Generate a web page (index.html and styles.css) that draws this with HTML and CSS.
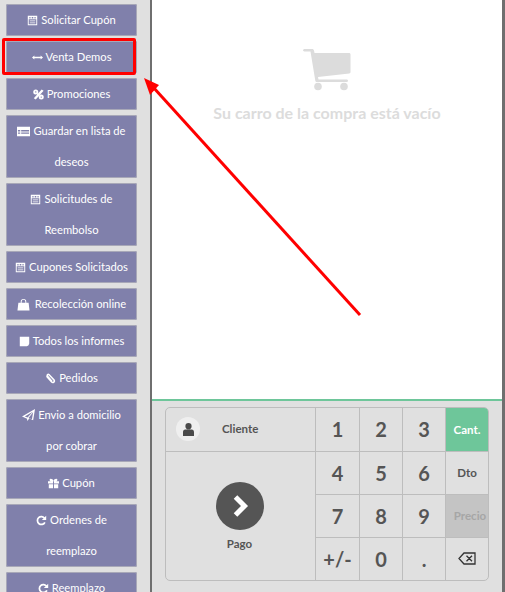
FILE: index.html
```html
<!DOCTYPE html>
<html lang="es">
<head>
  <meta charset="UTF-8">
  <title>Punto de venta</title>
  <link rel="stylesheet" href="styles.css">
</head>
<body>
  <div class="pos">
    <div class="side-menu">
      <a class="menu-btn"><svg class="ico" viewBox="0 0 14 14"><path fill="currentColor" fill-rule="evenodd" d="M1 1h12v12H1zM2.200 5.500v6.300h9.600V5.500zM3 2.500v2h1.500v-2zM6 2.500v2h2v-2zM9.500 2.500v2H11v-2zM3.500 7h7v1h-7zM3.500 9.500h7v1h-7z"/></svg>Solicitar Cupón</a>
      <a class="menu-btn"><svg class="ico" viewBox="0 0 14 14"><path fill="currentColor" d="M0 7l3-2.500V6h8V4.500L14 7l-3 2.500V8H3v1.500z"/></svg>Venta Demos</a>
      <a class="menu-btn"><svg class="ico" viewBox="0 0 14 14"><path fill="currentColor" fill-rule="evenodd" d="M11 .5l2.500 1.700L3.500 13.500 1 11.800zM3.500 .5a3.200 3.200 0 1 1 0 6.400 3.200 3.200 0 0 1 0-6.400zM3.500 2.800a.9.9 0 1 0 0 1.800.9.9 0 0 0 0-1.800zM10.500 7.100a3.200 3.200 0 1 1 0 6.400 3.200 3.200 0 0 1 0-6.400zM10.500 9.400a.9.9 0 1 0 0 1.800.9.9 0 0 0 0-1.800z"/></svg>Promociones</a>
      <a class="menu-btn"><svg class="ico ico-big" viewBox="0 0 14 14"><path fill="currentColor" fill-rule="evenodd" d="M0 2h14v10H0zM1 5.500v1.500h2.500V5.500zM4.500 5.500v1.500H13V5.500zM1 8v1.500h2.500V8zM4.500 8v1.500H13V8z"/></svg>Guardar en lista de deseos</a>
      <a class="menu-btn"><svg class="ico" viewBox="0 0 14 14"><path fill="currentColor" fill-rule="evenodd" d="M1 1h12v12H1zM2.200 5.500v6.300h9.600V5.500zM3 2.500v2h1.500v-2zM6 2.500v2h2v-2zM9.500 2.500v2H11v-2zM3.500 7h7v1h-7zM3.500 9.500h7v1h-7z"/></svg>Solicitudes de Reembolso</a>
      <a class="menu-btn"><svg class="ico" viewBox="0 0 14 14"><path fill="currentColor" fill-rule="evenodd" d="M1 1h12v12H1zM2.200 5.500v6.300h9.600V5.500zM3 2.500v2h1.500v-2zM6 2.500v2h2v-2zM9.500 2.500v2H11v-2zM3.500 7h7v1h-7zM3.500 9.500h7v1h-7z"/></svg>Cupones Solicitados</a>
      <a class="menu-btn"><svg class="ico ico-big ico-wide" viewBox="0 0 14 14"><path fill="currentColor" fill-rule="evenodd" d="M1.500 5H4V4a3 3 0 0 1 6 0v1h2.500l1 8.500H.5zM5 5h4V4a2 2 0 0 0-4 0z"/></svg>Recolección online</a>
      <a class="menu-btn"><svg class="ico" viewBox="0 0 14 14"><path fill="currentColor" d="M1 1h12v9l-3 3H1zM10.800 13v-2.200H13z"/></svg>Todos los informes</a>
      <a class="menu-btn"><svg class="ico" viewBox="0 0 14 14"><path fill="none" stroke="currentColor" stroke-width="2" d="M2 4l6.500 7.500a2 2 0 0 0 3-2.600L5 2a1.400 1.400 0 0 0-2 1.800l6 7"/></svg>Pedidos</a>
      <a class="menu-btn"><svg class="ico ico-big" viewBox="0 0 14 14"><path fill="currentColor" fill-rule="evenodd" d="M14 0l-2 12-4-1.700L5.500 13V10.500L0 8.200zM11.500 3L3 8l3 1.200zM12 3.500L7 9.600l3.700 1.500z"/></svg>Envio a domicilio<br>por cobrar</a>
      <a class="menu-btn"><svg class="ico" viewBox="0 0 14 14"><path fill="currentColor" d="M0 4.200h6.400v2.800H0zM7.600 4.200H14v2.800H7.600zM1 8h5.400v5H1zM7.600 8H13v5H7.600zM3.500 1C5 1 6.500 2 7 4c.5-2 2-3 3.500-3 2 0 2 3 0 3h-7c-2 0-2-3 0-3z"/></svg>Cupón</a>
      <a class="menu-btn"><svg class="ico" viewBox="0 0 14 14"><path fill="none" stroke="currentColor" stroke-width="2.200" d="M11.300 9.300A5 5 0 1 1 11 4.300"/><path fill="currentColor" d="M13 1v5.500H7.500z"/></svg>Ordenes de reemplazo</a>
      <a class="menu-btn"><svg class="ico" viewBox="0 0 14 14"><path fill="none" stroke="currentColor" stroke-width="2.200" d="M11.300 9.300A5 5 0 1 1 11 4.300"/><path fill="currentColor" d="M13 1v5.500H7.500z"/></svg>Reemplazo</a>
    </div>

    <div class="main">
      <div class="cart">
        <svg class="cart-ico" viewBox="0 0 48 42"><path fill="#dcdcdc" d="M2 0h7c1.200 0 1.800.6 2 1.600L11.500 4H46c1 0 1.500.6 1.500 1.500V23c0 .8-.5 1.300-1.300 1.400L15 28l.5 2.500h28c1 0 1.500.6 1.500 1.250s-.5 1.250-1.500 1.250H14c-1 0-1.500-.5-1.700-1.300L7.500 2.500H2C.7 2.500 0 1.900 0 1.250S.7 0 2 0z"/><circle fill="#dcdcdc" cx="15" cy="37.500" r="3.800"/><circle fill="#dcdcdc" cx="41" cy="37.500" r="3.800"/></svg>
        <p class="cart-empty">Su carro de la compra está vacío</p>
      </div>
      <div class="pad-area">
        <div class="pad">
          <div class="pad-left">
            <div class="client">
              <span class="avatar"><svg viewBox="0 0 12 14"><path fill="#4a4a4a" d="M6 0a3.400 3.400 0 1 1 0 6.800A3.400 3.400 0 0 1 6 0zM2.500 7h7c1.500 0 2.500 1.200 2.500 3v4H0v-4c0-1.800 1-3 2.500-3z"/></svg></span>
              <span class="client-name">Cliente</span>
            </div>
            <div class="pay">
              <span class="pay-circle"><svg viewBox="0 0 18 24"><path fill="none" stroke="#fff" stroke-width="5" d="M3.500 3l9 9-9 9"/></svg></span>
              <span class="pay-label">Pago</span>
            </div>
          </div>
          <div class="keys">
            <button class="key">1</button>
            <button class="key">2</button>
            <button class="key">3</button>
            <button class="key mode active">Cant.</button>
            <button class="key">4</button>
            <button class="key">5</button>
            <button class="key">6</button>
            <button class="key mode">Dto</button>
            <button class="key">7</button>
            <button class="key">8</button>
            <button class="key">9</button>
            <button class="key mode off">Precio</button>
            <button class="key">+/-</button>
            <button class="key">0</button>
            <button class="key">.</button>
            <button class="key back"><svg viewBox="0 0 18 13"><path fill="none" stroke="#333" stroke-width="1.300" d="M6 1h11v11H6L1 6.500zM8.500 3.800l5.500 5.500M14 3.800L8.500 9.300"/></svg></button>
          </div>
        </div>
      </div>
    </div>
  </div>

  <!-- anotaciones de la captura -->
  <div class="mark-box"></div>
  <svg class="mark-arrow" viewBox="0 0 505 592"><path fill="none" stroke="#ff0000" stroke-width="3" d="M360 315L153 87"/><path fill="#ff0000" d="M144 78l15 7-9 10z"/></svg>
</body>
</html>
```

FILE: styles.css
```css
* {
  box-sizing: border-box;
}

html, body {
  margin: 0;
  height: 100%;
  overflow: hidden;
}

body {
  position: relative;
  font-family: Lato, "Liberation Sans", sans-serif;
  background-color: #e0e0e0;
}

.pos {
  display: flex;
  height: 592px;
}

/* Menu lateral */
.side-menu {
  width: 150px;
  flex-shrink: 0;
  display: flex;
  flex-direction: column;
  gap: 5px;
  padding: 4px 13px 0 6px;
  overflow: hidden;
}

.menu-btn {
  display: block;
  flex-shrink: 0;
  padding: 0 5px 1px;
  background-color: #8080ab;
  box-shadow: inset 0 0 0 1px #a8a8b8;
  border-radius: 2px;
  color: #fff;
  font-size: 11.200px;
  line-height: 31px;
  text-align: center;
}

.ico {
  width: 11px;
  height: 11px;
  margin-right: 3px;
  vertical-align: -2px;
}

.ico-big {
  width: 13px;
  height: 13px;
  vertical-align: -3px;
}

.ico-wide {
  margin-right: 5px;
}

/* Zona principal */
.main {
  flex-grow: 1;
  display: flex;
  flex-direction: column;
  border-left: 2px solid #6f6f6f;
  border-right: 3px solid #6f6f6f;
}

.cart {
  height: 401px;
  flex-shrink: 0;
  background-color: #fff;
  border-bottom: 2px solid #6ec69a;
  display: flex;
  flex-direction: column;
  align-items: center;
  padding-top: 49px;
}

.cart-ico {
  width: 48px;
  height: 42px;
}

.cart-empty {
  margin: 12px 0 0;
  color: #dcdcdc;
  font-size: 16px;
  font-weight: 700;
}

.pad-area {
  flex-grow: 1;
  padding: 6px 13px 0 13px;
}

.pad {
  display: flex;
  width: 324px;
  height: 174px;
  border: 1px solid #bdbdbd;
  border-radius: 5px;
  overflow: hidden;
}

.pad-left {
  width: 150px;
  flex-shrink: 0;
  display: flex;
  flex-direction: column;
  border-right: 1px solid #bdbdbd;
}

.client {
  height: 44px;
  display: flex;
  align-items: center;
  padding-left: 10px;
  padding-bottom: 1px;
  border-bottom: 1px solid #bdbdbd;
}

.avatar {
  width: 24px;
  height: 24px;
  border-radius: 50%;
  background-color: #efefef;
  display: flex;
  align-items: center;
  justify-content: center;
}

.avatar svg {
  width: 11px;
  height: 13px;
}

.client-name {
  margin-left: 22px;
  margin-bottom: 1px;
  color: #555;
  font-size: 11.500px;
  font-weight: 700;
}

.pay {
  flex-grow: 1;
  display: flex;
  flex-direction: column;
  align-items: center;
  padding: 30px 2px 0 0;
}

.pay-circle {
  width: 48px;
  height: 48px;
  border-radius: 50%;
  background-color: #555;
  display: flex;
  align-items: center;
  justify-content: center;
}

.pay-circle svg {
  width: 18px;
  height: 24px;
  margin-left: 3px;
}

.pay-label {
  margin-top: 7px;
  color: #555;
  font-size: 11.500px;
  font-weight: 700;
}

.keys {
  flex-grow: 1;
  display: grid;
  grid-template-columns: 44px 43px 43px 1fr;
  grid-template-rows: 44px 43px 43px 1fr;
}

.key {
  padding: 0 0 1px;
  background: none;
  border: none;
  border-right: 1px solid #bdbdbd;
  border-bottom: 1px solid #bdbdbd;
  color: #555;
  font-family: inherit;
  font-size: 20px;
  font-weight: 700;
}

.key:nth-child(4n) {
  border-right: none;
}

.key:nth-child(n+13) {
  border-bottom: none;
}

.mode {
  font-size: 11.500px;
}

.active {
  background-color: #6ec69a;
  color: #fff;
}

.off {
  padding-left: 6px;
  background-color: #c4c4c4;
  color: #a6a6a6;
}

.back svg {
  width: 18px;
  height: 13px;
  display: block;
  margin: 0 auto;
}

/* Anotaciones */
.mark-box {
  position: absolute;
  left: 2px;
  top: 38px;
  width: 134px;
  height: 37px;
  border: 3px solid #ff0000;
  border-radius: 2px;
}

.mark-arrow {
  position: absolute;
  left: 0;
  top: 0;
  width: 505px;
  height: 592px;
}
```
